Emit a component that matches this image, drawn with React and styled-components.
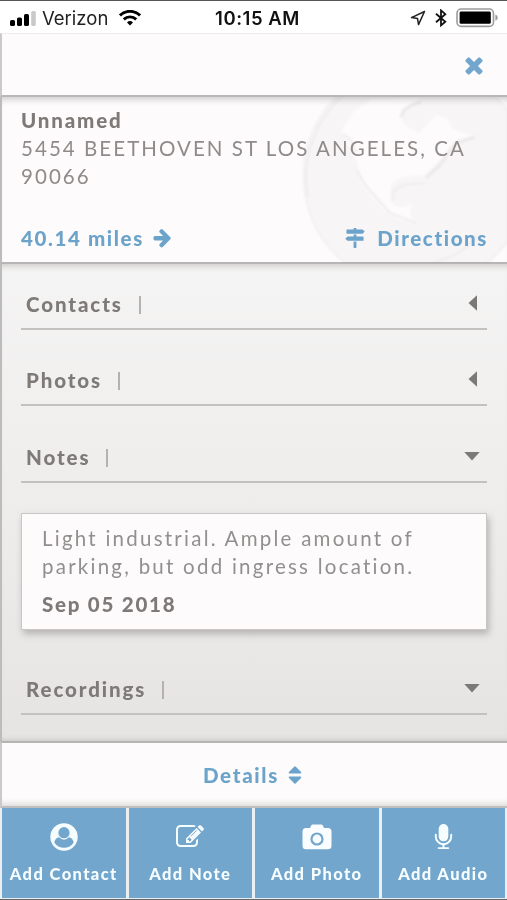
import styled, { createGlobalStyle } from "styled-components"

const GlobalStyle = createGlobalStyle`
    * {
        box-sizing: border-box;
    }

    body {
        margin: 0;
        font-family: Lato, "Open Sans", sans-serif;
        color: #7d7a77;
    }
`

const icons = {
    times: "M1490 1322q0 40-28 68l-136 136q-28 28-68 28t-68-28l-294-294-294 294q-28 28-68 28t-68-28l-136-136q-28-28-28-68t28-68l294-294-294-294q-28-28-28-68t28-68l136-136q28-28 68-28t68 28l294 294 294-294q28-28 68-28t68 28l136 136q28 28 28 68t-28 68l-294 294 294 294q28 28 28 68z",
    arrow: "M1600 960q0 54-37 91l-651 651q-39 37-91 37-51 0-90-37l-75-75q-38-38-38-91t38-91l293-293h-704q-52 0-84.5-37.5t-32.5-90.5v-128q0-53 32.5-90.5t84.5-37.5h704l-293-294q-38-36-38-90t38-90l75-75q38-38 90-38 53 0 91 38l651 651q37 35 37 90z",
    signs: "M1745 297q10 10 10 23t-10 23l-141 141q-28 28-68 28h-1344q-26 0-45-19t-19-45v-256q0-26 19-45t45-19h576v-64q0-26 19-45t45-19h128q26 0 45 19t19 45v64h512q40 0 68 28zm-977 919h256v512q0 26-19 45t-45 19h-128q-26 0-45-19t-19-45v-512zm832-448q26 0 45 19t19 45v256q0 26-19 45t-45 19h-1344q-40 0-68-28l-141-141q-10-10-10-23t10-23l141-141q28-28 68-28h512v-192h256v192h576z",
    sort: "M1408 1088q0 26-19 45l-448 448q-19 19-45 19t-45-19l-448-448q-19-19-19-45t19-45 45-19h896q26 0 45 19t19 45zm0-384q0 26-19 45t-45 19h-896q-26 0-45-19t-19-45 19-45l448-448q19-19 45-19t45 19l448 448q19 19 19 45z",
    note: "M888 1184l116-116-152-152-116 116v56h96v96h56zm440-720q-16-16-33 1l-350 350q-17 17-1 33t33-1l350-350q17-17 1-33zm80 594v190q0 119-84.5 203.5t-203.5 84.5h-832q-119 0-203.5-84.5t-84.5-203.5v-832q0-119 84.5-203.5t203.5-84.5h832q63 0 117 25 15 7 18 23 3 17-9 29l-49 49q-14 14-32 8-23-6-45-6h-832q-66 0-113 47t-47 113v832q0 66 47 113t113 47h832q66 0 113-47t47-113v-126q0-13 9-22l64-64q15-15 35-7t20 29zm-96-738l288 288-672 672h-288v-288zm444 132l-92 92-288-288 92-92q28-28 68-28t68 28l152 152q28 28 28 68t-28 68z",
    mic: "M1472 704v128q0 221-147.5 384.5t-364.5 187.5v132h256q26 0 45 19t19 45-19 45-45 19h-640q-26 0-45-19t-19-45 19-45 45-19h256v-132q-217-24-364.5-187.5t-147.5-384.5v-128q0-26 19-45t45-19 45 19 19 45v128q0 185 131.5 316.5t316.5 131.5 316.5-131.5 131.5-316.5v-128q0-26 19-45t45-19 45 19 19 45zm-256-384v512q0 132-94 226t-226 94-226-94-94-226v-512q0-132 94-226t226-94 226 94 94 226z",
}

const Icon = ({ name, size }) => (
    <svg width={size} height={size} viewBox="0 0 1792 1792" fill="currentColor">
        <path d={icons[name]} />
    </svg>
)

const Signal = () => (
    <svg width="28" height="18" viewBox="0 0 28 18">
        <rect x="0" y="11" width="5" height="6" rx="1.6" />
        <rect x="7" y="8.5" width="5" height="8.5" rx="1.6" />
        <rect x="14" y="5" width="5" height="12" rx="1.6" />
        <rect x="21.2" y="2" width="4.6" height="15" rx="1.6" fill="#c9c9c9" />
    </svg>
)

const Wifi = () => (
    <svg width="22" height="16" viewBox="0 0 22 16" fill="none" stroke="#000" strokeWidth="2.9">
        <path d="M1 5.4a14.2 14.2 0 0 1 20 0" />
        <path d="M4.8 9.4a8.8 8.8 0 0 1 12.4 0" />
        <path d="M11 15.5l-3-3.1a4.3 4.3 0 0 1 6 0z" fill="#000" stroke="none" />
    </svg>
)

const Location = () => (
    <svg width="16" height="16" viewBox="0 0 16 16" fill="none" stroke="#222" strokeWidth="1.5" strokeLinejoin="round">
        <path d="M14.5 1.5L1.5 7.6l6 .8 1 6.2z" />
    </svg>
)

const Bluetooth = () => (
    <svg width="12" height="18" viewBox="0 0 12 18" fill="none" stroke="#111" strokeWidth="1.8">
        <path d="M1 4.7l9.3 8.1L6 16.4V1.4l4.3 3.8L1 13.3" />
    </svg>
)

const Battery = () => (
    <svg width="43" height="20" viewBox="0 0 43 20">
        <rect x="1" y="1" width="36.5" height="17.4" rx="4.2" fill="#fff" stroke="#9c9c9c" strokeWidth="1.6" />
        <rect x="3.6" y="3.6" width="31.2" height="12.2" rx="1.4" />
        <path d="M39.4 6.6q2.4 1 2.4 3.1t-2.4 3.1z" fill="#9c9c9c" />
    </svg>
)

const Contact = () => (
    <svg width="28" height="28" viewBox="0 0 28 28">
        <circle cx="14" cy="14" r="13.7" fill="#f6fdff" />
        <circle cx="14" cy="9.7" r="5.6" fill="#72a6cc" />
        <path d="M4.3 19.5c.6-3 2.3-4.9 4.9-5.2Q11.3 16.7 14 16.7t4.8-2.4c2.6.3 4.3 2.2 4.9 5.2a11.5 11.5 0 0 1-19.4 0z" fill="#72a6cc" />
    </svg>
)

const Camera = () => (
    <svg width="30" height="26" viewBox="0 0 30 26">
        <path
            d="M4 4h4l1-2.3Q9.7.5 11 .5h8q1.3 0 2 1.2L22 4h4q3.5 0 3.5 3.5v14.3q0 3.500-3.500 3.500H4q-3.500 0-3.500-3.500V7.500Q.5 4 4 4z"
            fill="#f9fdff"
        />
        <circle cx="15" cy="15" r="5.5" fill="none" stroke="#72a6cc" strokeWidth="2.2" />
    </svg>
)

const Globe = () => (
    <GlobeArt width="205" height="166" viewBox="302 97 205 166">
        <defs>
            <filter id="soften" x="-10%" y="-10%" width="120%" height="120%" colorInterpolationFilters="sRGB">
                <feGaussianBlur stdDeviation="0.9" />
            </filter>
        </defs>
        <g filter="url(#soften)">
            <circle cx="416" cy="176" r="112.5" fill="#f9f9f9" stroke="#f3f2f2" strokeWidth="1.5" />
            <path d="M308 197A109 109 0 0 1 350 90" fill="none" stroke="#efeeee" strokeWidth="1.5" />
            <path
                d="M341 131l13-20 18-12 46-2 4 5-12 5-9 9 2 7 8 6 8 4 8-9 9-9 11 3 5 10 9 4 13 3-19 6-9 12-8 9-13 13-22 2-11 6-2 11 5 12 8 1 9-3-2 10 5 9-12-2-15-7-14-14-13-16-4-22z"
                fill="#fff"
            />
            <g fill="none" stroke="#efeeee" strokeWidth="3.5" strokeLinejoin="round">
                <path d="M401 117l3-7 8-5 9-3" />
                <path d="M475 137l-19 6-9 12-7 10-14 13" />
            </g>
            <g fill="none" stroke="#f2f1f1" strokeWidth="2.2" strokeLinejoin="round">
                <path d="M426 183l-22 2-10 5-2 12" />
                <path d="M357 170l8 15 15 17 10 11 13 5 13 5" />
                <path d="M343 134l8 6 5 12" />
                <path d="M434 262q26-5 44-27" />
            </g>
        </g>
    </GlobeArt>
)

const sections = [
    { title: "Contacts" },
    { title: "Photos" },
    { title: "Notes", open: true },
]

const SectionBar = ({ title, open }) => (
    <SectionRow>
        <SectionTitle>{title}</SectionTitle>
        <Divider />
        <Caret width="16" height="16" viewBox="0 0 16 16">
            <path d={open ? "M.3 4h15.4l-7.7 8.5z" : "M4.5 8L13 .3v15.4z"} />
        </Caret>
    </SectionRow>
)

const App = () => {
    return (
        <>
            <GlobalStyle />
            <Screen>
                <StatusBar>
                    <StatusSide>
                        <Signal />
                        <Carrier>Verizon</Carrier>
                        <Wifi />
                    </StatusSide>
                    <Clock>10:15 AM</Clock>
                    <StatusSide $end>
                        <Location />
                        <Bluetooth />
                        <Battery />
                    </StatusSide>
                </StatusBar>

                <TopBar>
                    <CloseButton aria-label="Close"><Icon name="times" size={26} /></CloseButton>
                </TopBar>

                <Place>
                    <Globe />
                    <PlaceName>Unnamed</PlaceName>
                    <Address>5454 BEETHOVEN ST LOS ANGELES, CA<br />90066</Address>
                    <PlaceLinks>
                        <PlaceLink $gap="8px"><span>40.14 miles</span><Icon name="arrow" size={21} /></PlaceLink>
                        <PlaceLink $gap="12px"><Icon name="signs" size={20} /><span>Directions</span></PlaceLink>
                    </PlaceLinks>
                </Place>

                <Content>
                    {sections.map((section) => (
                        <SectionBar key={section.title} {...section} />
                    ))}
                    <NoteCard>
                        <NoteText>Light industrial. Ample amount of<br />parking, but odd ingress location.</NoteText>
                        <NoteDate>Sep 05 2018</NoteDate>
                    </NoteCard>
                    <SectionBar title="Recordings" open />
                </Content>

                <DetailsBar>
                    <span>Details</span>
                    <Icon name="sort" size={22} />
                </DetailsBar>

                <Actions>
                    <Action><ActionIcon><Contact /></ActionIcon>Add Contact</Action>
                    <Action><ActionIcon><Icon name="note" size={28} /></ActionIcon>Add Note</Action>
                    <Action><ActionIcon><Camera /></ActionIcon>Add Photo</Action>
                    <Action><ActionIcon><Icon name="mic" size={27} /></ActionIcon>Add Audio</Action>
                </Actions>
            </Screen>
        </>
    )
}

export default App

const Screen = styled.div`
    width: 507px;
    height: 900px;
    display: flex;
    flex-direction: column;
    overflow: hidden;
    background: #fdfbfc;
    border-top: 1px solid #555;
    border-bottom: 1px solid #666;
`

const StatusBar = styled.header`
    height: 32px;
    flex: none;
    display: grid;
    grid-template-columns: 1fr auto 1fr;
    align-items: center;
    padding: 1px 8px 0 10px;
    background: #fff;
    color: #111;
    font-family: Inter, sans-serif;
`

const StatusSide = styled.div`
    display: flex;
    align-items: center;
    justify-content: ${(props) => (props.$end ? "flex-end" : "flex-start")};
    gap: ${(props) => (props.$end ? "9px" : "0")};
`

const Carrier = styled.span`
    width: 67px;
    margin: 0 10px 0 4px;
    font-size: 18.5px;
    color: #222;
`

const Clock = styled.span`
    margin-left: 6px;
    font-size: 18.5px;
    font-weight: 600;
    letter-spacing: 0.55px;
`

const TopBar = styled.div`
    height: 64px;
    flex: none;
    display: flex;
    align-items: center;
    justify-content: flex-end;
    padding-right: 20px;
    border-top: 1px solid #eeecec;
    border-left: 2px solid #cbc9ca;
    border-bottom: 2px solid #b9b7b7;
`

const CloseButton = styled.button`
    display: flex;
    padding: 0;
    border: 0;
    background: none;
    color: #72a6cc;
`

const Place = styled.section`
    position: relative;
    height: 167px;
    flex: none;
    display: flex;
    flex-direction: column;
    padding: 9px 19px 0 19px;
    border-left: 2px solid #bdbbbc;
    border-bottom: 2px solid #b8b6b5;
    box-shadow: inset 0 7px 7px -5px #c8c6c5;
    font-size: 20.5px;
    line-height: 28.5px;
    color: #8e8b88;
`

const GlobeArt = styled.svg`
    position: absolute;
    right: 0;
    top: 0;
    mix-blend-mode: multiply;
`

const PlaceName = styled.h1`
    position: relative;
    margin: 0;
    font-size: 20.5px;
    font-weight: 900;
    letter-spacing: 1.85px;
    color: #7d7a77;
`

const Address = styled.p`
    position: relative;
    margin: -1px 0 0;
    letter-spacing: 2.05px;
    white-space: nowrap;
`

const PlaceLinks = styled.div`
    position: relative;
    display: flex;
    justify-content: space-between;
    margin-top: 33px;
`

const PlaceLink = styled.a`
    display: flex;
    align-items: center;
    gap: ${(props) => props.$gap};
    font-weight: 900;
    font-size: 20.5px;
    letter-spacing: 1.6px;
    color: #6ba3cb;
`

const Content = styled.main`
    flex: 1;
    min-height: 0;
    padding: 0 20px 0 19px;
    border-left: 2px solid #bdbbbc;
    background: linear-gradient(#f5f4f4, #eeedec 50%, #e5e4e3);
    box-shadow: inset 0 7px 6px -5px #cbc8c7, inset 0 -6px 5px -5px #c8c6c5;
`

const SectionRow = styled.div`
    height: 76.3px;
    display: flex;
    align-items: flex-end;
    padding: 0 7px 10px 5px;
    border-bottom: 2px solid #c3c1c0;

    &:first-child {
        height: 66px;
    }
`

const SectionTitle = styled.h2`
    margin: 0;
    font-size: 20.5px;
    line-height: 28px;
    font-weight: 900;
    letter-spacing: 1.9px;
`

const Divider = styled.span`
    width: 2px;
    height: 18px;
    margin: 0 auto 4px 16px;
    background: #b4b1b0;
`

const Caret = styled.svg`
    margin-bottom: 7px;
    fill: #7b7976;
`

const NoteCard = styled.article`
    height: 117px;
    margin: 30px 0 9.5px;
    padding: 10px 20px;
    border: 1px solid #c9c7c6;
    background: #fdfbfc;
    box-shadow: 2px 4px 7px #b5b3b2;
    font-size: 20.5px;
    line-height: 28.5px;
`

const NoteText = styled.p`
    margin: 0;
    letter-spacing: 2.24px;
    white-space: nowrap;
    color: #92908e;
`

const NoteDate = styled.p`
    margin: 9.5px 0 0;
    font-size: 20.5px;
    font-weight: 900;
    letter-spacing: 1.75px;
`

const DetailsBar = styled.div`
    height: 67px;
    flex: none;
    display: flex;
    align-items: center;
    justify-content: center;
    gap: 5px;
    border-top: 2px solid #b6b4b3;
    border-left: 2px solid #cbc9ca;
    border-bottom: 2px solid #c1bfbe;
    box-shadow: inset 0 -7px 6px -5px #d8d6d5;
    font-size: 20.5px;
    font-weight: 900;
    letter-spacing: 1.7px;
    color: #6ba3cb;
`

const Actions = styled.footer`
    height: 91px;
    flex: none;
    display: grid;
    grid-template-columns: repeat(4, 1fr);
    gap: 3px;
    padding: 0 2px 1px 2px;
    background: #e9eff3;
`

const Action = styled.button`
    display: flex;
    flex-direction: column;
    align-items: center;
    padding: 14px 0 0;
    border: 0;
    background: #72a6cc;
    color: #f6fdff;
    font-family: inherit;
    font-size: 16.5px;
    font-weight: 900;
    line-height: 22px;
    letter-spacing: 1.4px;
    white-space: nowrap;
`

const ActionIcon = styled.span`
    height: 30px;
    margin-bottom: 11px;
    display: flex;
    align-items: center;
`
